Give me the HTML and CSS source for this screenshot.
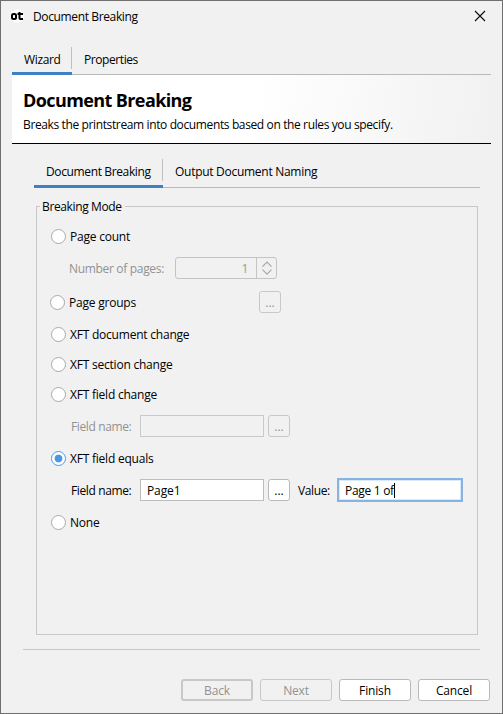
FILE: index.html
```html
<!DOCTYPE html>
<html lang="en">
<head>
<meta charset="utf-8">
<title>Document Breaking</title>
<link rel="stylesheet" href="styles.css">
</head>
<body>
<div class="window">
  <header class="titlebar">
    <svg class="logo" width="14" height="14" viewBox="0 0 14 14"><circle cx="7" cy="7" r="6.800" fill="#fff"/><rect x="2" y="5" width="4" height="5" rx="1.500" fill="none" stroke="#000" stroke-width="2"/><path d="M9.500 3v6.200q0 .8.800.8H13M7.500 5H13" fill="none" stroke="#000" stroke-width="2"/></svg>
    <span class="title">Document Breaking</span>
    <svg class="close" width="12" height="12" viewBox="0 0 12 12"><path d="M1 1l10 10M11 1L1 11" stroke="#111" stroke-width="1.2"/></svg>
  </header>

  <nav class="tabs outer">
    <span class="tab active">Wizard</span>
    <span class="tab">Properties</span>
  </nav>

  <section class="banner">
    <h1>Document Breaking</h1>
    <p>Breaks the printstream into documents based on the rules you specify.</p>
  </section>

  <nav class="tabs inner">
    <span class="tab active">Document Breaking</span>
    <span class="tab naming">Output Document Naming</span>
  </nav>

  <fieldset class="group">
    <legend>Breaking Mode</legend>
    <div class="option"><i class="radio"></i><span>Page count</span></div>
    <div class="fields pages off">
      <span class="label">Number of pages:</span>
      <span class="spinner"><b>1</b><svg width="19" height="20" viewBox="0 0 19 20"><path d="M5.500 8.700L10 4.200l4.500 4.500M5.500 11.700L10 16.200l4.500-4.500" fill="none" stroke="#a6a6a6" stroke-width="1.2"/></svg></span>
    </div>
    <div class="option groups"><i class="radio"></i><span>Page groups</span><span class="browse off">...</span></div>
    <div class="option"><i class="radio"></i><span>XFT document change</span></div>
    <div class="option close-row"><i class="radio"></i><span>XFT section change</span></div>
    <div class="option close-row"><i class="radio"></i><span>XFT field change</span></div>
    <div class="fields off">
      <span class="label">Field name:</span>
      <span class="input"></span>
      <span class="browse off">...</span>
    </div>
    <div class="option"><i class="radio checked"></i><span>XFT field equals</span></div>
    <div class="fields">
      <span class="label">Field name:</span>
      <span class="input">Page1</span>
      <span class="browse">...</span>
      <span class="value-label">Value:</span>
      <span class="input focused">Page 1 of<i class="caret"></i></span>
    </div>
    <div class="option"><i class="radio"></i><span>None</span></div>
  </fieldset>

  <footer class="actions">
    <span class="button off heavy">Back</span>
    <span class="button off">Next</span>
    <span class="button">Finish</span>
    <span class="button">Cancel</span>
  </footer>
</div>
</body>
</html>
```
FILE: styles.css
```css
* { box-sizing: border-box; }
body {
  margin: 0;
  font: 12px/16px "Open Sans", "Noto Sans", sans-serif;
  letter-spacing: -0.37px;
  color: #000;
  background: #f1f1f1;
}
.window {
  width: 503px;
  height: 714px;
  border: 1px solid #6f6f6f;
  display: flex;
  flex-direction: column;
  white-space: nowrap;
}
.titlebar {
  height: 43px;
  padding: 8px 16px 0 9px;
  display: flex;
  align-items: flex-start;
}
.title { margin-left: 9px; }
.close { margin: 1px 0 0 auto; width: 12px; }
.tabs {
  display: flex;
  border-bottom: 1px solid #b9b9b9;
}
.tab { position: relative; padding: 8px 12px 0; }
.naming { letter-spacing: -0.28px; }
.tab.active::before {
  content: "";
  position: absolute;
  right: 0;
  top: 3px;
  width: 1px;
  height: 22px;
  background: #bfbfbf;
}
.tab.active::after {
  content: "";
  position: absolute;
  left: 0;
  right: 0;
  bottom: -1px;
  height: 3px;
  background: #3d80c4;
}
.outer { height: 31px; margin: 0 11px; }
.outer .tab { letter-spacing: -0.42px; }
.outer .tab.active { width: 60px; letter-spacing: -0.35px; }
.banner {
  height: 69px;
  margin: 0 11px;
  padding: 13px 11px 0;
  border-bottom: 1px solid #000;
  background: linear-gradient(100deg, #fff 50%, #f1f1f1 100%);
}
h1 { margin: 0; font-size: 18px; line-height: 24px; letter-spacing: -0.6px; }
p { margin: 5px 0 0; letter-spacing: -0.375px; }
.inner { height: 32px; margin: 12px 22px 0 33px; }
.inner .tab.active { width: 129px; }
.group {
  position: relative;
  width: 442px;
  height: 429px;
  margin: 18px 0 0 35px;
  padding: 19px 0 0 14px;
  border: 1px solid #c8c8c8;
}
legend {
  position: absolute;
  left: 3px;
  top: -8px;
  padding: 0 3px 0 2px;
  background: #f1f1f1;
}
.option {
  display: flex;
  align-items: center;
  height: 21px;
  margin-top: 11px;
  letter-spacing: -0.22px;
}
legend + .option { margin-top: 0; }
.option.close-row { margin-top: 9px; }
.radio {
  flex: none;
  width: 15px;
  height: 15px;
  margin-right: 4px;
  border: 1px solid #a9a9a9;
  border-radius: 50%;
  background: #fff;
}
.radio.checked {
  border-color: #4a9be8;
  background: radial-gradient(circle, #4a98e4 3.5px, #fff 4.3px);
}
.groups { height: 22px; margin-top: 12px; margin-left: -1px; }
.groups span:not(.browse) { padding-top: 2px; }
.groups .browse { margin-left: auto; margin-right: 196px; }
.fields { display: flex; align-items: center; height: 22px; margin-top: 10px; padding-left: 20px; }
.fields.pages { padding-left: 18px; }
.off { color: #919191; }
.label { width: 69px; padding-top: 2px; }
.pages .label { width: 106px; letter-spacing: -0.32px; }
.input {
  width: 124px;
  height: 22px;
  padding: 3px 6px 1px;
  border: 1px solid #bdbdbd;
  background: #fff;
  letter-spacing: -0.1px;
}
.off .input { background: #f1f1f1; border-color: #cacaca; }
.input.focused {
  position: relative;
  width: 126px;
  height: 24px;
  margin: -1px 0;
  padding: 3px 6px 1px;
  border: 2px solid #87b3e0;
  box-shadow: inset 0 0 0 1px #dbe8f6;
  letter-spacing: -0.3px;
}
.caret { display: inline-block; width: 1px; height: 15px; background: #000; vertical-align: top; }
.browse {
  width: 22px;
  height: 22px;
  margin-left: 4px;
  border: 1px solid #b9b9b9;
  border-radius: 3px;
  background: #fff;
  text-align: center;
  line-height: 22px;
  letter-spacing: 0;
}
.browse.off { background: #f1f1f1; border-color: #c8c8c8; }
.value-label { width: 39px; margin-left: 8px; padding-top: 2px; }
.spinner {
  display: flex;
  width: 102px;
  height: 22px;
  border: 1px solid #c4c4c4;
  border-radius: 3px;
  color: #8fa08f;
}
.spinner b {
  flex: 1;
  padding: 3px 8px 1px;
  border-right: 1px solid #c4c4c4;
  font-weight: 400;
  text-align: right;
}
.actions {
  display: flex;
  gap: 7px;
  margin: 14px 22px 0;
  padding: 29px 0 0 158px;
  border-top: 1px solid #c8c8c8;
}
.button {
  flex: none;
  width: 72px;
  height: 22px;
  border: 1px solid #b9b9b9;
  border-radius: 3px;
  background: #fff;
  text-align: center;
  line-height: 22px;
  letter-spacing: -0.15px;
}
.button.off { background: #f1f1f1; border-color: #c8c8c8; }
.button.heavy { border-width: 2px; line-height: 20px; }
```
